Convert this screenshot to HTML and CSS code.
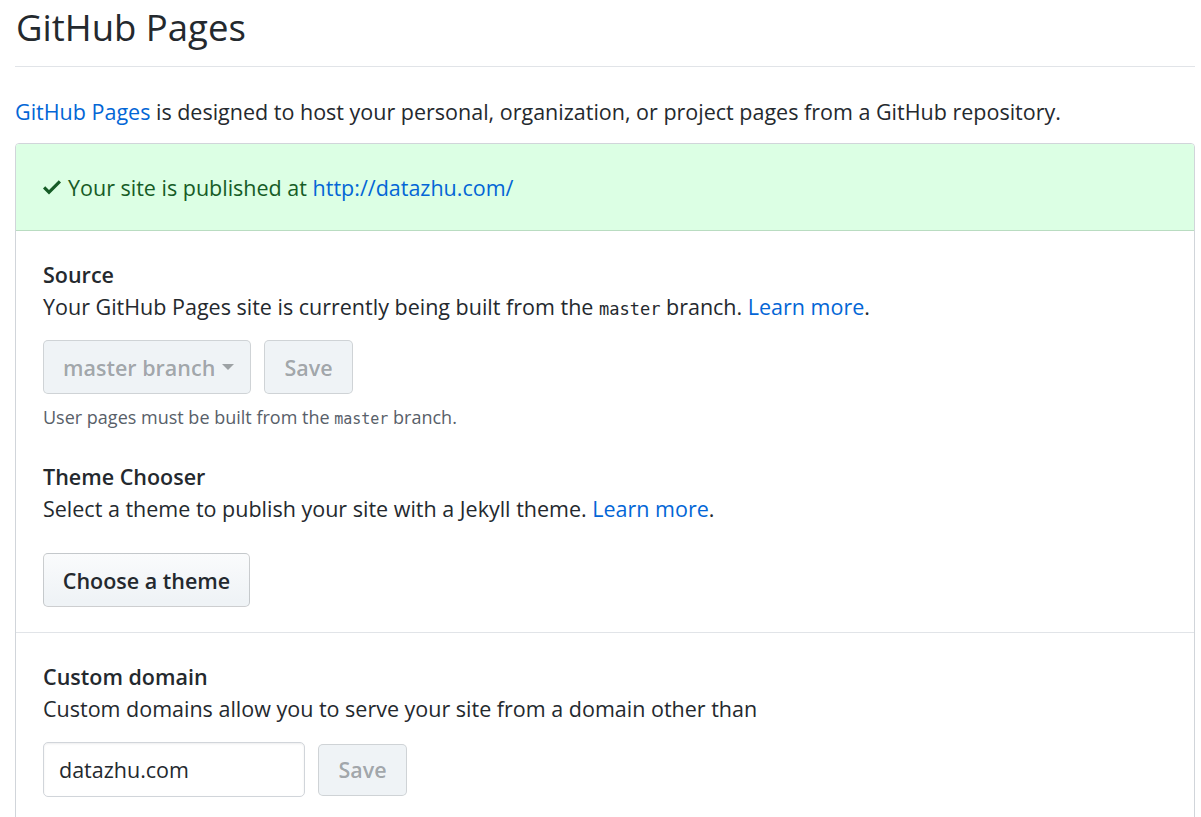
FILE: index.html
```html
<!DOCTYPE html>
<html lang="en">
<head>
<meta charset="utf-8">
<title>GitHub Pages</title>
<link rel="stylesheet" href="styles.css">
</head>
<body>
<div class="page">
  <h2 class="subhead">GitHub Pages</h2>
  <p class="intro"><a href="#">GitHub Pages</a> is designed to host your personal, organization, or project pages from a GitHub repository.</p>
  <div class="box">
    <div class="flash">
      <svg class="check" viewBox="0 0 12 16" width="18" height="24" aria-hidden="true"><path d="M12 5l-8 8-4-4 1.5-1.5L4 10l6.5-6.5L12 5z"/></svg>
      <span>Your site is published at <a href="#">http://datazhu.com/</a></span>
    </div>
    <div class="row">
      <h3 class="title">Source</h3>
      <p class="desc">Your GitHub Pages site is currently being built from the <code>master</code> branch. <a href="#">Learn more</a>.</p>
      <div class="actions">
        <button class="btn btn-disabled btn-select">master branch<span class="caret"></span></button>
        <button class="btn btn-disabled btn-save">Save</button>
      </div>
      <p class="note">User pages must be built from the <code>master</code> branch.</p>
      <h3 class="title title-gap">Theme Chooser</h3>
      <p class="desc">Select a theme to publish your site with a Jekyll theme. <a href="#">Learn more</a>.</p>
      <div class="actions actions-theme">
        <button class="btn btn-theme">Choose a theme</button>
      </div>
    </div>
    <div class="row row-domain">
      <h3 class="title">Custom domain</h3>
      <p class="desc">Custom domains allow you to serve your site from a domain other than</p>
      <div class="actions actions-domain">
        <input class="field" type="text" value="datazhu.com">
        <button class="btn btn-disabled btn-save2">Save</button>
      </div>
    </div>
  </div>
</div>
</body>
</html>
```
FILE: styles.css
```css
html, body {
  margin: 0;
  padding: 0;
  background: #fff;
}
body {
  font-family: "Open Sans", "Noto Sans", "Liberation Sans", sans-serif;
  color: #24292e;
  font-size: 21.5px;
}
a {
  color: #0366d6;
  text-decoration: none;
}
.page {
  width: 1180px;
  padding-left: 15px;
}
.subhead {
  margin: 0;
  padding: 2px 0 14px 1px;
  font-size: 36.5px;
  font-weight: 400;
  line-height: 50px;
  border-bottom: 1.5px solid #e1e4e8;
}
.intro {
  margin: 0;
  padding: 29px 0 15px 0;
  line-height: 32px;
}
.box {
  border: 1.5px solid #d1d5da;
  border-radius: 4px;
  overflow: hidden;
}
.flash {
  display: flex;
  align-items: center;
  gap: 7px;
  height: 86px;
  padding: 0 27px;
  background: #dcffe4;
  color: #165c26;
  border-bottom: 1.5px solid #b9dcc1;
}
.check {
  fill: #165c26;
  flex: none;
}
.row {
  padding: 28px 27px 25px;
}
.row + .row {
  border-top: 1.5px solid #e1e4e8;
}
.row-domain {
  padding-top: 28px;
  padding-bottom: 40px;
}
.title {
  margin: 0;
  font-size: 21.5px;
  font-weight: 600;
  line-height: 32px;
}
.title-gap {
  margin-top: 28px;
}
.desc {
  margin: 0;
  line-height: 32px;
}
code {
  font-family: "DejaVu Sans Mono", "Liberation Mono", monospace;
  font-size: 17px;
}
.actions {
  display: flex;
  gap: 13px;
  margin-top: 15px;
}
.actions-theme {
  margin-top: 28px;
}
.actions-domain {
  margin-top: 17px;
  align-items: center;
}
.btn {
  font-family: inherit;
  font-size: 21.5px;
  height: 54px;
  padding: 0 19px;
  border-radius: 5px;
  border: 1.5px solid rgba(27, 31, 35, 0.2);
  background: linear-gradient(#fafbfc, #eff3f6 90%);
  color: #24292e;
  font-weight: 600;
  display: inline-flex;
  align-items: center;
  white-space: nowrap;
}
.btn-disabled {
  background: #eff3f6;
  color: rgba(36, 41, 46, 0.4);
  border-color: rgba(27, 31, 35, 0.15);
}
.btn-select {
  width: 208px;
  justify-content: flex-start;
}
.btn-save {
  width: 89px;
  justify-content: center;
}
.btn-theme {
  width: 207px;
  justify-content: center;
}
.btn-save2 {
  width: 89px;
  height: 52px;
  justify-content: center;
}
.caret {
  display: inline-block;
  width: 0;
  height: 0;
  margin-left: 7px;
  border-top: 6px solid currentColor;
  border-left: 6px solid transparent;
  border-right: 6px solid transparent;
}
.note {
  margin: 10px 0 0;
  font-size: 18px;
  line-height: 27px;
  color: #586069;
}
.note code {
  font-size: 15px;
}
.field {
  box-sizing: border-box;
  width: 262px;
  height: 55px;
  padding: 0 15px;
  font-family: inherit;
  font-size: 21.5px;
  color: #24292e;
  border: 1.5px solid #d1d5da;
  border-radius: 5px;
  box-shadow: inset 0 1px 2px rgba(27, 31, 35, 0.075);
  background: #fff;
}
```
